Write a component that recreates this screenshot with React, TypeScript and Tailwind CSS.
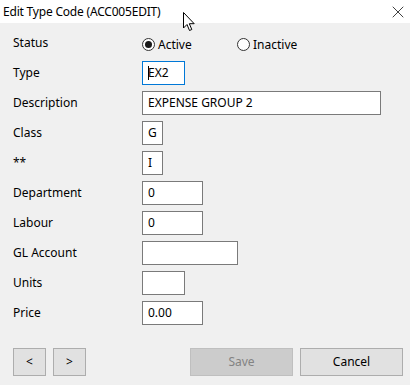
import { X } from "lucide-react";

type Field = {
  label: string;
  value: string;
  width: string;
  focused?: boolean;
};

const fields: Field[] = [
  { label: "Type", value: "EX2", width: "w-[43px]", focused: true },
  { label: "Description", value: "EXPENSE GROUP 2", width: "w-[239px]" },
  { label: "Class", value: "G", width: "w-[21px]" },
  { label: "**", value: "I", width: "w-[21px]" },
  { label: "Department", value: "0", width: "w-[61px]" },
  { label: "Labour", value: "0", width: "w-[61px]" },
  { label: "GL Account", value: "", width: "w-[96px]" },
  { label: "Units", value: "", width: "w-[43px]" },
  { label: "Price", value: "0.00", width: "w-[61px]" },
];

function Radio({ label, checked }: { label: string; checked?: boolean }) {
  return (
    <div className="flex items-center gap-[3px]">
      <span className="flex h-[13px] w-[13px] items-center justify-center rounded-full border border-[#333333] bg-white">
        {checked && <span className="h-[7px] w-[7px] rounded-full bg-[#1a1a1a]" />}
      </span>
      <span>{label}</span>
    </div>
  );
}

export default function App() {
  return (
    <div
      className="relative h-[385px] w-[410px] bg-[#f0f0f0] text-[12px] text-black"
      style={{ fontFamily: '"Noto Sans", sans-serif' }}
    >
      {/* Title bar */}
      <div className="flex h-[23px] items-center justify-between bg-white pl-[3px] pr-[2px]">
        <span className="tracking-[-0.2px]">Edit Type Code (ACC005EDIT)</span>
        <X className="h-[20px] w-[20px]" strokeWidth={0.9} />
      </div>

      {/* Form */}
      <div className="flex flex-col gap-[6px] pl-[13px] pt-[8px]">
        <div className="flex h-[24px] items-center">
          <span className="w-[129px]">Status</span>
          <div className="flex items-center pt-[3px]">
            <div className="w-[95px]">
              <Radio label="Active" checked />
            </div>
            <Radio label="Inactive" />
          </div>
        </div>
        {fields.map((f) => (
          <div key={f.label} className="flex h-[24px] items-center">
            <span className="w-[129px]">{f.label}</span>
            <div
              className={`flex h-[24px] items-center border bg-white pl-[5px] ${f.width} ${
                f.focused ? "border-[#0078d7]" : "border-[#7a7a7a]"
              }`}
            >
              {f.focused && <span className="-mr-[1px] h-[14px] w-px bg-black" />}
              <span className="whitespace-nowrap">{f.value}</span>
            </div>
          </div>
        ))}
      </div>

      {/* Buttons */}
      <div className="mt-[23px] flex items-center pl-[13px] pr-[7px]">
        <button className="h-[28px] w-[33px] border border-[#adadad] bg-[#e1e1e1]">&lt;</button>
        <button className="ml-[7px] h-[28px] w-[33px] border border-[#adadad] bg-[#e1e1e1]">&gt;</button>
        <button className="ml-auto h-[28px] w-[103px] border border-[#bfbfbf] bg-[#cccccc] text-[#838383]">
          Save
        </button>
        <button className="ml-[7px] h-[28px] w-[103px] border border-[#adadad] bg-[#e1e1e1]">Cancel</button>
      </div>

      {/* Mouse pointer */}
      <svg className="absolute left-[183px] top-[12px]" width="13" height="20" viewBox="0 0 13 20">
        <path d="M0.5 0.5 L0.5 16 L4 12.5 L6.5 18.5 L8.8 17.5 L6.3 11.7 L11.2 11.7 Z" fill="white" stroke="black" strokeWidth="1" />
      </svg>
    </div>
  );
}
